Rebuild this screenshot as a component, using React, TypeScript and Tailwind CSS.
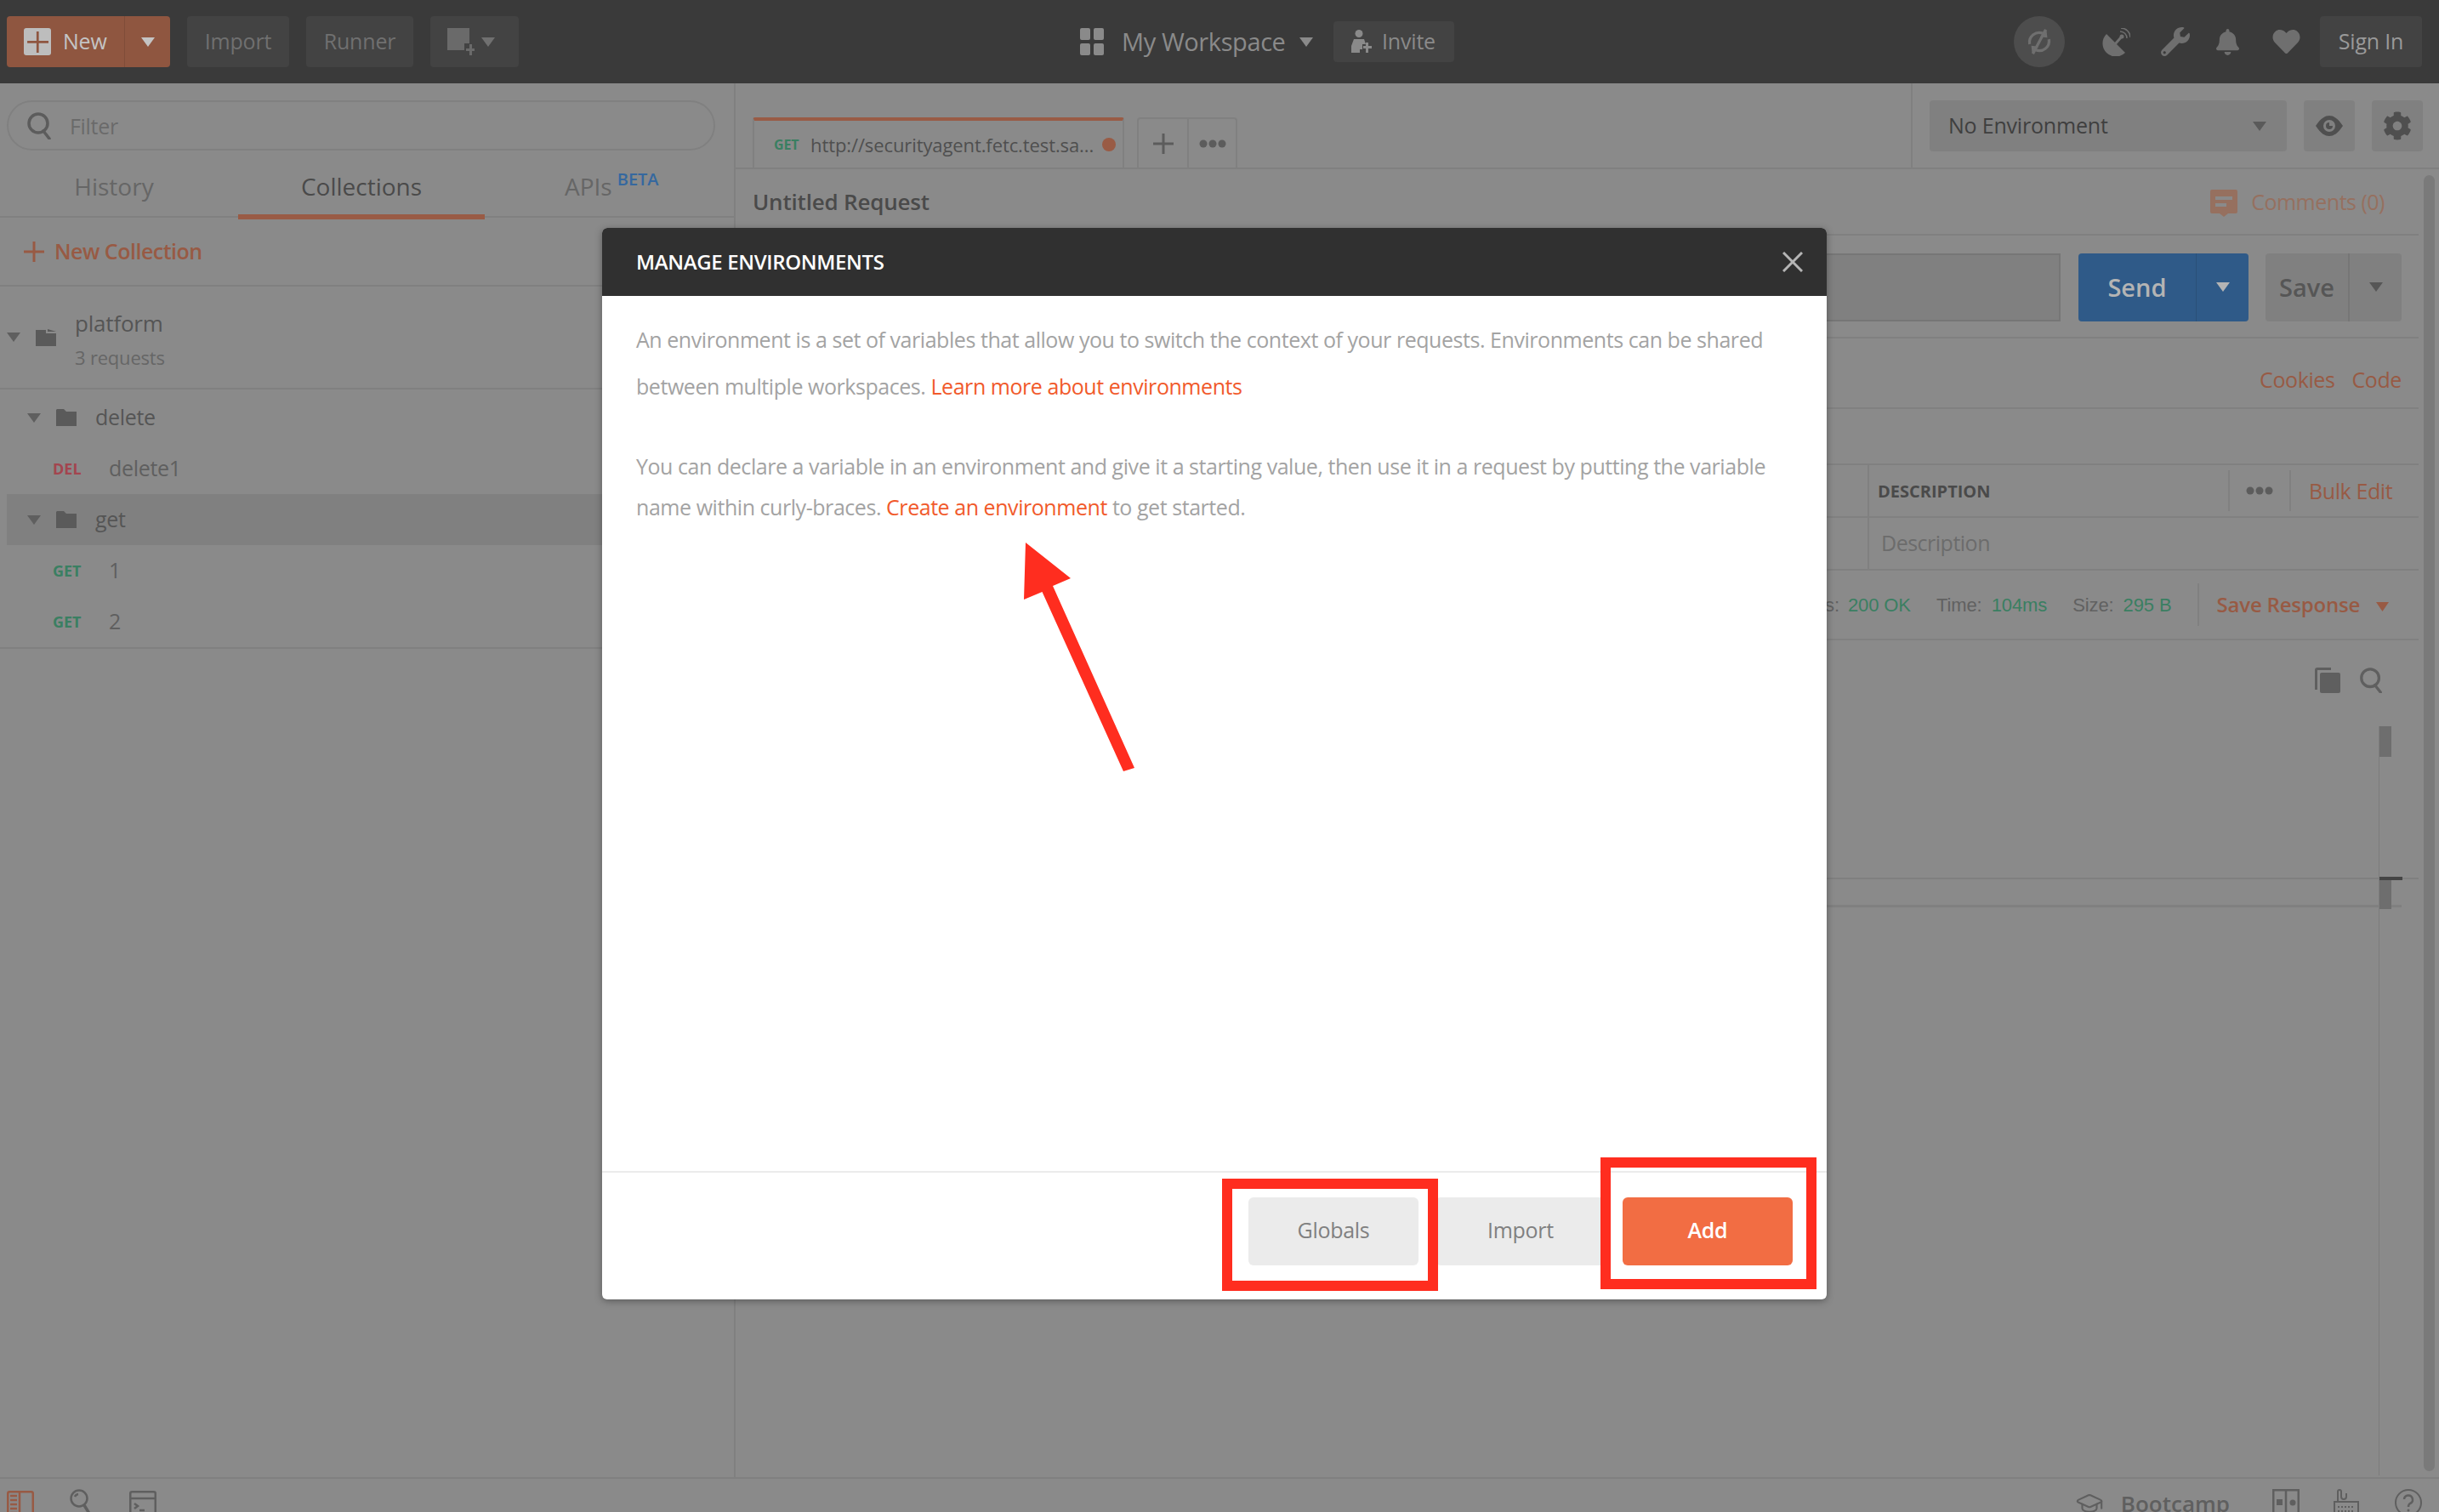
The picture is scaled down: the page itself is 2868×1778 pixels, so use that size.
import { FaBell, FaCog, FaHeart, FaWrench } from 'react-icons/fa';
import { GraduationCap } from 'lucide-react';

function Caret({ className }: { className: string }) {
  return (
    <svg viewBox="0 0 16 11" preserveAspectRatio="none" className={className}>
      <path d="M0 0h16L8 11z" fill="currentColor" />
    </svg>
  );
}

function Folder({ open }: { open?: boolean }) {
  return (
    <svg viewBox="0 0 24 20" className="w-[24px] h-[20px] text-[#5a5a5a]">
      {open ? (
        <path d="M0 1h12v4h12v15H0z M14 0l10 3h-10z" fill="currentColor" />
      ) : (
        <path d="M1 0h8l3 3h12v17H0V1z" fill="currentColor" />
      )}
    </svg>
  );
}

function Search({ className }: { className: string }) {
  return (
    <svg viewBox="0 0 28 32" className={className} fill="none" stroke="currentColor" strokeWidth="3.5">
      <circle cx="13" cy="13" r="11" />
      <path d="M19 22l7 9" strokeLinecap="round" />
    </svg>
  );
}

function Dots() {
  return (
    <svg viewBox="0 0 32 10" className="w-[32px] h-[10px] text-[#5c5c5c]">
      <circle cx="5" cy="5" r="4.5" fill="currentColor" />
      <circle cx="16" cy="5" r="4.5" fill="currentColor" />
      <circle cx="27" cy="5" r="4.5" fill="currentColor" />
    </svg>
  );
}

function TopBar() {
  return (
    <header className="h-[98px] shrink-0 bg-[#3a3a3a] flex items-center pl-[8px] pr-[20px] text-[#707070] text-[25px] tracking-[-0.2px]">
      <div className="flex h-[60px] w-[192px] rounded-[4px] bg-[#8f5640] text-[#c4c4c4]">
        <div className="flex items-center w-[139px] pl-[20px] gap-[14px] border-r border-[#7f4c39]">
          <div className="w-[32px] h-[32px] rounded-[3px] bg-[#bdbdbd] flex items-center justify-center">
            <svg viewBox="0 0 24 24" className="w-[26px] h-[26px] text-[#8f5640]">
              <path d="M11 1h2.5v10H24v2.5H13.5V24H11V13.5H1V11h10z" fill="currentColor" />
            </svg>
          </div>
          <span>New</span>
        </div>
        <div className="flex-1 flex items-center justify-center">
          <Caret className="w-[16px] h-[11px]" />
        </div>
      </div>
      <div className="ml-[20px] w-[120px] h-[60px] rounded-[4px] bg-[#434343] flex items-center justify-center">Import</div>
      <div className="ml-[20px] w-[126px] h-[60px] rounded-[4px] bg-[#434343] flex items-center justify-center">Runner</div>
      <div className="ml-[20px] w-[104px] h-[60px] rounded-[4px] bg-[#434343] flex items-center pl-[20px] gap-[8px]">
        <svg viewBox="0 0 32 32" className="w-[32px] h-[32px] text-[#6a6a6a]">
          <path d="M0 0h26v18h-6v8H0z M22 24h4v-5h3v5h3v3h-3v5h-3v-5h-4z" fill="currentColor" />
        </svg>
        <Caret className="w-[16px] h-[11px]" />
      </div>

      <div className="ml-[660px] flex items-center">
        <div className="grid grid-cols-2 gap-[4px] w-[28px]">
          <span className="h-[14px] rounded-[2px] bg-[#8a8a8a]" />
          <span className="h-[14px] rounded-[2px] bg-[#8a8a8a]" />
          <span className="h-[14px] rounded-[2px] bg-[#8a8a8a]" />
          <span className="h-[14px] rounded-[2px] bg-[#8a8a8a]" />
        </div>
        <span className="ml-[21px] text-[29px] tracking-[-0.4px] text-[#8a8a8a]">My Workspace</span>
        <Caret className="ml-[16px] w-[16px] h-[11px] text-[#8a8a8a]" />
        <div className="ml-[24px] w-[142px] h-[48px] rounded-[4px] bg-[#434343] text-[#8a8a8a] flex items-center justify-center gap-[12px]">
          <svg viewBox="0 0 24 28" className="w-[24px] h-[28px]">
            <circle cx="9" cy="4.5" r="4.5" fill="currentColor" />
            <path d="M3 11h12l2 6h-4v6h-3v4H0v-8z M14 19h3v-4h3v4h4v3h-4v5h-3v-5h-3z" fill="currentColor" />
          </svg>
          <span>Invite</span>
        </div>
      </div>

      <div className="ml-auto flex items-center">
        <div className="w-[60px] h-[60px] rounded-full bg-[#4d4d4d] flex items-center justify-center text-[#6f6f6f]">
          <svg viewBox="0 0 36 36" className="w-[34px] h-[34px]" fill="none" stroke="currentColor" strokeWidth="3.5">
            <path d="M6 21a12 12 0 0 1 17-13 M30 15a12 12 0 0 1-17 13" />
            <path d="M27 4l1 9-9-1z M9 32l-1-9 9 1z" fill="currentColor" stroke="none" />
            <path d="M10 33L26 3" />
          </svg>
        </div>
        <svg viewBox="0 0 33 33" className="ml-[44px] w-[33px] h-[33px] text-[#6f6f6f]" fill="none" stroke="currentColor">
          <path d="M5 7L27 29A15.500 15.500 0 0 1 5 7z" fill="currentColor" stroke="none" />
          <path d="M15 19L22 11" strokeWidth="3" />
          <circle cx="23" cy="10" r="2.500" fill="currentColor" stroke="none" />
          <path d="M21 4a8 8 0 0 1 8 8 M22 0a11 11 0 0 1 11 11" strokeWidth="1.500" />
        </svg>
        <FaWrench className="ml-[36px] w-[34px] h-[34px] text-[#6f6f6f]" />
        <FaBell className="ml-[31px] w-[27px] h-[33px] text-[#6f6f6f]" />
        <FaHeart className="ml-[39px] w-[33px] h-[32px] text-[#6f6f6f]" />
        <div className="ml-[23px] w-[120px] h-[60px] rounded-[4px] bg-[#434343] text-[#9a9a9a] flex items-center justify-center">Sign In</div>
      </div>
    </header>
  );
}

function TreeRow({ method, label, color }: { method: string; label: string; color: string }) {
  return (
    <div className="h-[60px] flex items-center pl-[62px]">
      <span className={`w-[66px] text-[18px] font-bold ${color}`}>{method}</span>
      <span className="text-[25px] tracking-[-0.3px] text-[#5f5f5f]">{label}</span>
    </div>
  );
}

function Sidebar() {
  return (
    <aside className="w-[865px] shrink-0 border-r-2 border-[#808080] flex flex-col">
      <div className="h-[158px] shrink-0 border-b-2 border-[#808080] relative">
        <div className="mt-[20px] ml-[8px] w-[833px] h-[59px] rounded-full border-2 border-[#808080] flex items-center pl-[22px] gap-[22px] text-[#6a6a6a]">
          <Search className="w-[28px] h-[32px] text-[#5c5c5c]" />
          <span className="text-[25px] tracking-[-0.3px] mt-[2px]">Filter</span>
        </div>
        <div className="flex mt-[21px] h-[60px] text-[28px] text-[#666666]">
          <div className="w-[280px] flex justify-center pr-[12px]">History</div>
          <div className="w-[290px] flex justify-center text-[#4a4a4a] border-b-[6px] border-[#995b45]">Collections</div>
          <div className="pl-[94px] flex">
            APIs
            <span className="ml-[6px] -mt-[2px] text-[20px] font-semibold text-[#35689f]">BETA</span>
          </div>
        </div>
      </div>
      <div className="h-[81px] shrink-0 border-b-2 border-[#808080] flex items-center pl-[28px] gap-[12px] text-[25px] tracking-[-0.5px] font-semibold text-[#985a44]">
        <svg viewBox="0 0 24 24" className="w-[24px] h-[24px]">
          <path d="M10.500 0h3v10.500H24v3H13.500V24h-3V13.500H0v-3h10.500z" fill="currentColor" />
        </svg>
        New Collection
      </div>
      <div className="h-[121px] shrink-0 border-b-2 border-[#808080] flex items-center pl-[8px]">
        <Caret className="w-[16px] h-[11px] text-[#5f5f5f]" />
        <span className="ml-[18px]">
          <Folder open />
        </span>
        <div className="ml-[22px] pt-[6px]">
          <div className="text-[26px] tracking-[-0.2px] leading-[38px] text-[#555555]">platform</div>
          <div className="text-[22px] tracking-[-0.2px] leading-[36px] mt-[3px] text-[#666666]">3 requests</div>
        </div>
      </div>
      <div className="h-[60px] mt-[3px] flex items-center pl-[32px]">
        <Caret className="w-[16px] h-[11px] text-[#5f5f5f]" />
        <span className="ml-[18px]">
          <Folder />
        </span>
        <span className="ml-[22px] text-[25px] tracking-[-0.3px] text-[#555555]">delete</span>
      </div>
      <TreeRow method="DEL" label="delete1" color="text-[#a3454f]" />
      <div className="h-[60px] ml-[8px] bg-[#808080] flex items-center pl-[24px]">
        <Caret className="w-[16px] h-[11px] text-[#5f5f5f]" />
        <span className="ml-[18px]">
          <Folder />
        </span>
        <span className="ml-[22px] text-[25px] tracking-[-0.3px] text-[#555555]">get</span>
      </div>
      <TreeRow method="GET" label="1" color="text-[#3a7f62]" />
      <TreeRow method="GET" label="2" color="text-[#3a7f62]" />
      <div className="border-b-2 border-[#808080]" />
    </aside>
  );
}

function RequestPane() {
  return (
    <main className="flex-1 min-w-0 flex flex-col">
      <div className="h-[101px] shrink-0 border-b-2 border-[#808080] flex">
        <div className="mt-[40px] ml-[20px] w-[437px] h-[60px] border-t-[4px] border-[#995b45] rounded-t-[3px] border-x-2 border-x-[#808080] flex items-center pl-[23px] text-[22px] tracking-[-0.1px] text-[#4f4f4f]">
          <span className="w-[43px] text-[16px] font-bold text-[#3a7f62]">GET</span>
          <span className="w-[343px] whitespace-nowrap">http://securityagent.fetc.test.sa...</span>
          <span className="w-[16px] h-[16px] rounded-full bg-[#995b45]" />
        </div>
        <div className="mt-[40px] ml-[15px] w-[118px] h-[60px] border-2 border-b-0 border-[#808080] rounded-t-[4px] flex items-center">
          <div className="w-[59px] h-full border-r-2 border-[#808080] flex items-center justify-center">
            <svg viewBox="0 0 24 24" className="w-[24px] h-[24px] text-[#5c5c5c]">
              <path d="M10.500 0h3v10.500H24v3H13.500V24h-3V13.500H0v-3h10.500z" fill="currentColor" />
            </svg>
          </div>
          <div className="flex-1 flex justify-center">
            <Dots />
          </div>
        </div>
        <div className="ml-auto w-[621px] border-l-2 border-[#808080] flex items-start pt-[20px] pl-[20px]">
          <div className="w-[420px] h-[60px] rounded-[4px] bg-[#808080] flex items-center justify-between pl-[22px] pr-[24px] text-[25px] tracking-[-0.2px] text-[#3f3f3f]">
            No Environment
            <Caret className="w-[16px] h-[11px] text-[#5a5a5a]" />
          </div>
          <div className="ml-[20px] w-[60px] h-[60px] rounded-[4px] bg-[#808080] flex items-center justify-center text-[#4f4f4f]">
            <svg viewBox="0 0 32 24" className="w-[32px] h-[24px]">
              <path d="M0 12C6 3 11 0 16 0s10 3 16 12c-6 9-11 12-16 12S6 21 0 12z M16 5a7 7 0 1 0 0 14a7 7 0 0 0 0-14z" fill="currentColor" fillRule="evenodd" />
              <path d="M16 8a4 4 0 1 0 4 4h-4z" fill="currentColor" />
            </svg>
          </div>
          <div className="ml-[20px] w-[60px] h-[60px] rounded-[4px] bg-[#808080] flex items-center justify-center text-[#4f4f4f]">
            <FaCog className="w-[34px] h-[34px]" />
          </div>
        </div>
      </div>

      <div className="mr-[24px] flex flex-col">
        <div className="h-[78px] shrink-0 border-b-2 border-[#808080] flex items-center justify-between pl-[20px] pr-[40px]">
          <span className="text-[26px] tracking-[-0.2px] font-semibold text-[#4a4a4a]">Untitled Request</span>
          <div className="flex items-center gap-[16px] pt-[2px] text-[25px] tracking-[-0.5px] text-[#96705f]">
            <svg viewBox="0 0 32 32" className="w-[32px] h-[32px] mt-[2px] text-[#96705f]">
              <path d="M2 0h28a2 2 0 0 1 2 2v24a2 2 0 0 1-2 2h-9l-5 4-5-4H2a2 2 0 0 1-2-2V2a2 2 0 0 1 2-2z M6 8v4h20V8z M6 16v4h13v-4z" fill="currentColor" fillRule="evenodd" />
            </svg>
            Comments (0)
          </div>
        </div>
        <div className="h-[121px] shrink-0 border-b-2 border-[#808080] flex items-center pt-[2px] pl-[20px] pr-[20px]">
          <div className="flex-1 h-[80px] bg-[#808080] border-2 border-[#767676]" />
          <div className="ml-[21px] w-[200px] h-[80px] rounded-[4px] bg-[#2f5a88] flex text-[#b4b4b4]">
            <div className="w-[139px] border-r border-[#2a5078] flex items-center justify-center text-[29px] font-semibold">Send</div>
            <div className="flex-1 flex items-center justify-center">
              <Caret className="w-[16px] h-[11px]" />
            </div>
          </div>
          <div className="ml-[20px] w-[160px] h-[80px] rounded-[4px] bg-[#808080] flex text-[#565656]">
            <div className="w-[99px] border-r-2 border-[#767676] flex items-center justify-center text-[29px] font-semibold">Save</div>
            <div className="flex-1 flex items-center justify-center">
              <Caret className="w-[16px] h-[11px]" />
            </div>
          </div>
        </div>
        <div className="h-[83px] shrink-0 border-b-2 border-[#808080] flex items-center justify-end gap-[20px] pr-[20px] pt-[16px] text-[25px] tracking-[-0.4px] text-[#985a44]">
          <span>Cookies</span>
          <span>Code</span>
        </div>
        <div className="h-[66px] shrink-0 border-b-2 border-[#808080]" />
        <div className="h-[62px] shrink-0 border-b-2 border-[#808080] flex items-stretch pl-[1331px]">
          <div className="w-[424px] border-l-2 border-[#808080] pl-[10px] pt-[2px] flex items-center text-[20px] font-bold text-[#4a4a4a]">DESCRIPTION</div>
          <div className="w-[74px] my-[6px] border-x-2 border-[#808080] flex items-center justify-center">
            <Dots />
          </div>
          <div className="pl-[21px] pt-[2px] flex items-center text-[25px] tracking-[-0.4px] text-[#985a44]">Bulk Edit</div>
        </div>
        <div className="h-[62px] shrink-0 border-b-2 border-[#808080] flex items-stretch pl-[1331px]">
          <div className="flex-1 border-l-2 border-[#808080] pl-[14px] flex items-center text-[25px] tracking-[-0.5px] text-[#6c6c6c]">Description</div>
        </div>
        <div className="h-[82px] shrink-0 border-b-2 border-[#808080] flex items-center pl-[1281px] font-['Liberation_Sans',sans-serif] text-[22px] tracking-[-0.1px] text-[#616161]">
          <span>s:</span>
          <span className="ml-[10px] text-[#3a7f62]">200 OK</span>
          <span className="ml-[30px]">Time:</span>
          <span className="ml-[11px] text-[#3a7f62]">104ms</span>
          <span className="ml-[30px]">Size:</span>
          <span className="ml-[11px] text-[#3a7f62]">295 B</span>
          <span className="ml-[30px] h-[50px] border-l-2 border-[#808080]" />
          <span className="ml-[21px] font-['Open_Sans',sans-serif] text-[24px] tracking-[-0.2px] font-semibold text-[#985a44]">Save Response</span>
          <Caret className="ml-[19px] w-[15px] h-[11px] text-[#985a44] mt-[4px]" />
        </div>
        <div className="h-[101px] shrink-0 flex items-start justify-end pt-[32px] pr-[42px] gap-[22px] text-[#5f5f5f]">
          <svg viewBox="0 0 30 30" className="w-[30px] h-[30px]">
            <path d="M0 3a3 3 0 0 1 3-3h16v3H3v23H0z" fill="currentColor" />
            <rect x="6" y="6" width="24" height="24" rx="2" fill="currentColor" />
          </svg>
          <Search className="w-[28px] h-[30px]" />
        </div>
        <div className="h-[180px] border-b-[2px] border-[#7f7f7f] flex justify-end pr-[20px]">
          <div className="w-[27px] border-l border-[#7c7c7c]">
            <div className="w-[14px] h-[36px] bg-[#6e6e6e]" />
          </div>
        </div>
        <div className="h-[33px] border-b-[3px] border-[#808080] mr-[20px] flex justify-end">
          <div className="w-[27px] border-l border-[#7c7c7c] relative">
            <div className="absolute -top-[3px] left-0 w-[27px] h-[4px] bg-[#444444]" />
            <div className="w-[14px] h-[35px] bg-[#6e6e6e]" />
          </div>
        </div>
        <div className="h-[668px] mr-[20px] flex justify-end">
          <div className="w-[27px] border-l border-[#7c7c7c]" />
        </div>
      </div>
    </main>
  );
}

function BottomBar() {
  return (
    <footer className="relative z-10 h-[41px] shrink-0 bg-[#8a8a8a] border-t-2 border-[#808080] flex items-start pt-[14px] text-[#5f5f5f]">
      <svg viewBox="0 0 32 32" className="ml-[8px] w-[32px] h-[32px] text-[#985a44]" fill="none" stroke="currentColor" strokeWidth="2.500">
        <rect x="1.250" y="1.250" width="29.500" height="29.500" rx="2" />
        <path d="M15 1v30 M4 6h8 M4 11h8 M4 16h8 M4 21h8 M4 26h8" />
      </svg>
      <svg viewBox="0 0 26 34" className="ml-[42px] -mt-[2px] w-[26px] h-[34px]" fill="none" stroke="currentColor" strokeWidth="2.500">
        <circle cx="11" cy="11" r="9.500" />
        <path d="M6 9a5 5 0 0 1 4-3" />
        <path d="M17 19l8 13" strokeWidth="3.500" />
      </svg>
      <svg viewBox="0 0 32 32" className="ml-[44px] w-[32px] h-[32px]" fill="none" stroke="currentColor" strokeWidth="2.500">
        <rect x="1.250" y="1.250" width="29.500" height="29.500" rx="2" />
        <path d="M1 9h30 M6 15l4 3-4 3 M12 23h6" />
      </svg>
      <div className="ml-auto flex items-start">
        <GraduationCap className="w-[34px] h-[34px] -mt-[2px] stroke-[1.5]" />
        <span className="ml-[20px] -mt-[3px] text-[26px] leading-[36px] font-semibold">Bootcamp</span>
        <svg viewBox="0 0 32 32" className="ml-[50px] -mt-[2px] w-[32px] h-[32px]" fill="none" stroke="currentColor" strokeWidth="2.500">
          <rect x="1.250" y="1.250" width="29.500" height="29.500" />
          <path d="M16 1v30" />
          <rect x="5" y="12" width="7" height="7" fill="currentColor" stroke="none" />
          <circle cx="24" cy="16" r="3.500" fill="currentColor" stroke="none" />
        </svg>
        <svg viewBox="0 0 30 34" className="ml-[40px] -mt-[2px] w-[30px] h-[34px]" fill="none" stroke="currentColor" strokeWidth="2">
          <path d="M5 15V3a2 2 0 0 1 4 0v6a3 3 0 0 0 6 0V5" />
          <rect x="1" y="15" width="28" height="18" />
          <path d="M5 21h20 M5 26h20" strokeDasharray="2 2" />
        </svg>
        <svg viewBox="0 0 32 32" className="ml-[42px] mr-[20px] -mt-[2px] w-[32px] h-[32px]" fill="none" stroke="currentColor" strokeWidth="2">
          <circle cx="16" cy="16" r="15" />
          <path d="M11 12a5 5 0 1 1 7 5c-2 1-2 2-2 4" strokeWidth="2.500" />
          <circle cx="16" cy="25" r="1.500" fill="currentColor" stroke="none" />
        </svg>
      </div>
    </footer>
  );
}

function ManageEnvironments() {
  return (
    <div className="absolute left-[708px] top-[268px] w-[1440px] h-[1260px] bg-white rounded-[6px] shadow-[0_2px_8px_rgba(0,0,0,0.35)] flex flex-col overflow-hidden">
      <div className="h-[80px] shrink-0 bg-[#303030] flex items-center justify-between pl-[40px] pr-[28px]">
        <span className="text-[24px] tracking-[-0.35px] font-semibold text-white">MANAGE ENVIRONMENTS</span>
        <svg viewBox="0 0 24 24" className="w-[24px] h-[24px] text-[#b5b5b5]" fill="none" stroke="currentColor" strokeWidth="3">
          <path d="M1 1l22 22M23 1L1 23" />
        </svg>
      </div>
      <div className="flex-1 px-[40px] pt-[24px] text-[25px] tracking-[-0.45px] whitespace-nowrap text-[#a3a3a3]">
        <p className="leading-[55px]">
          An environment is a set of variables that allow you to switch the context of your requests. Environments can be shared
          <br />
          between multiple workspaces. <span className="text-[#f15a2b]">Learn more about environments</span>
        </p>
        <p className="mt-[42px] leading-[48px]">
          You can declare a variable in an environment and give it a starting value, then use it in a request by putting the variable
          <br />
          name within curly-braces. <span className="text-[#f15a2b]">Create an environment</span> to get started.
        </p>
      </div>
      <div className="h-[151px] shrink-0 border-t-2 border-[#ebebeb] flex items-start justify-end pt-[29px] pr-[40px] gap-[20px] text-[25px] tracking-[-0.3px]">
        <button className="w-[200px] h-[80px] pb-[2px] rounded-[6px] bg-[#ebebeb] text-[#808080]">Globals</button>
        <button className="w-[200px] h-[80px] pb-[2px] rounded-[6px] bg-[#ebebeb] text-[#808080]">Import</button>
        <button className="w-[200px] h-[80px] pb-[2px] rounded-[6px] bg-[#f26d43] text-white font-semibold">Add</button>
      </div>
    </div>
  );
}

export default function App() {
  return (
    <div className="relative w-[2868px] h-[1778px] overflow-hidden bg-[#8a8a8a] font-['Open_Sans',sans-serif] flex flex-col">
      <TopBar />
      <div className="flex-1 min-h-0 flex">
        <Sidebar />
        <RequestPane />
      </div>
      <BottomBar />

      <div className="absolute left-[2850px] top-[206px] w-[13px] h-[1524px] rounded-full bg-[#7a7a7a]" />

      <ManageEnvironments />

      {/* annotations drawn on top of the screenshot */}
      <div className="absolute left-[1437px] top-[1386px] w-[254px] h-[132px] border-[12px] border-[#ff2d1f]" />
      <div className="absolute left-[1882px] top-[1361px] w-[254px] h-[155px] border-[12px] border-[#ff2d1f]" />
      <svg className="absolute left-[1200px] top-[630px] w-[140px] h-[285px]" viewBox="1200 630 140 285">
        <path d="M1206 638L1259 680L1238 689L1334 903L1321 907L1225.500 696L1204 705z" fill="#ff2d1f" />
      </svg>
    </div>
  );
}
